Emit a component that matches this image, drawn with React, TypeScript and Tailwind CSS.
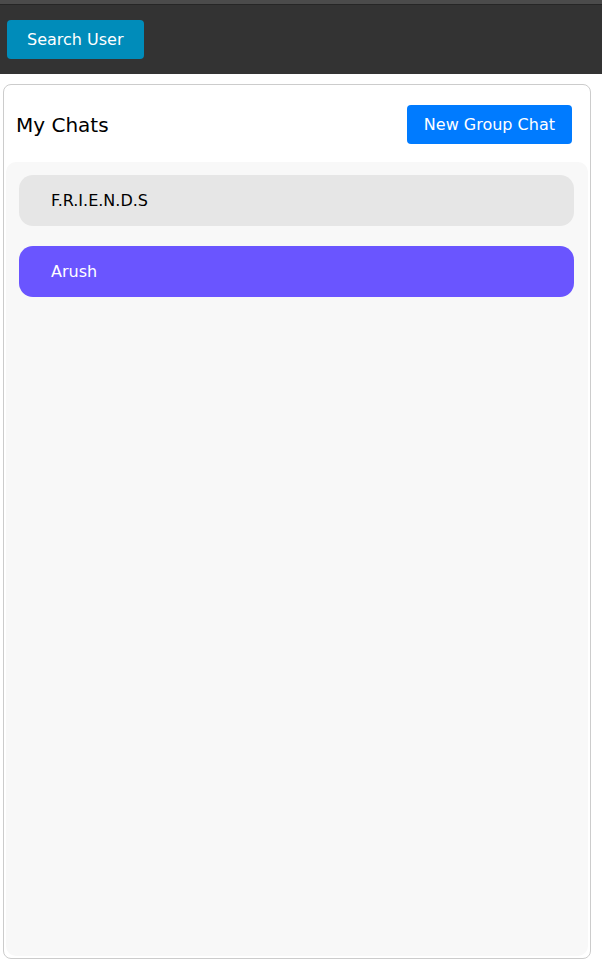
export default function App() {
  const chats = [
    { name: 'F.R.I.E.N.D.S', selected: false },
    { name: 'Arush', selected: true },
  ];

  return (
    <div className="h-[966px] w-[602px] bg-white font-['DejaVu_Sans',sans-serif]">
      {/* Top bar */}
      <div className="h-[4px] bg-[#4b4b4b]" />
      <div className="flex h-[70px] items-start border-t border-[#262626] bg-[#333333] px-[7px] pt-[15px]">
        <button className="h-[39px] rounded-[4px] bg-[#008cba] px-[20px] text-[16px] text-white">
          Search User
        </button>
      </div>

      {/* Chats card */}
      <div className="ml-[3px] mt-[10px] flex h-[875px] w-[588px] flex-col rounded-[8px] border border-[#cccccc] bg-white p-[2px]">
        <div className="flex h-[75px] items-center justify-between pl-[10px] pr-[16px]">
          <span className="text-[20px] text-black">My Chats</span>
          <button className="h-[39px] rounded-[4px] bg-[#007bff] px-[17px] text-[16px] text-white">
            New Group Chat
          </button>
        </div>
        <div className="flex flex-1 flex-col gap-[20px] rounded-[10px] bg-[#f8f8f8] pb-[14px] pl-[13px] pr-[14px] pt-[13px]">
          {chats.map((chat) => (
            <div
              key={chat.name}
              className={
                chat.selected
                  ? 'flex h-[51px] items-center rounded-[14px] bg-[#6a55ff] pl-[32px] text-[16px] text-white'
                  : 'flex h-[51px] items-center rounded-[14px] bg-[#e6e6e6] pl-[32px] text-[16px] text-black'
              }
            >
              {chat.name}
            </div>
          ))}
        </div>
      </div>
    </div>
  );
}
